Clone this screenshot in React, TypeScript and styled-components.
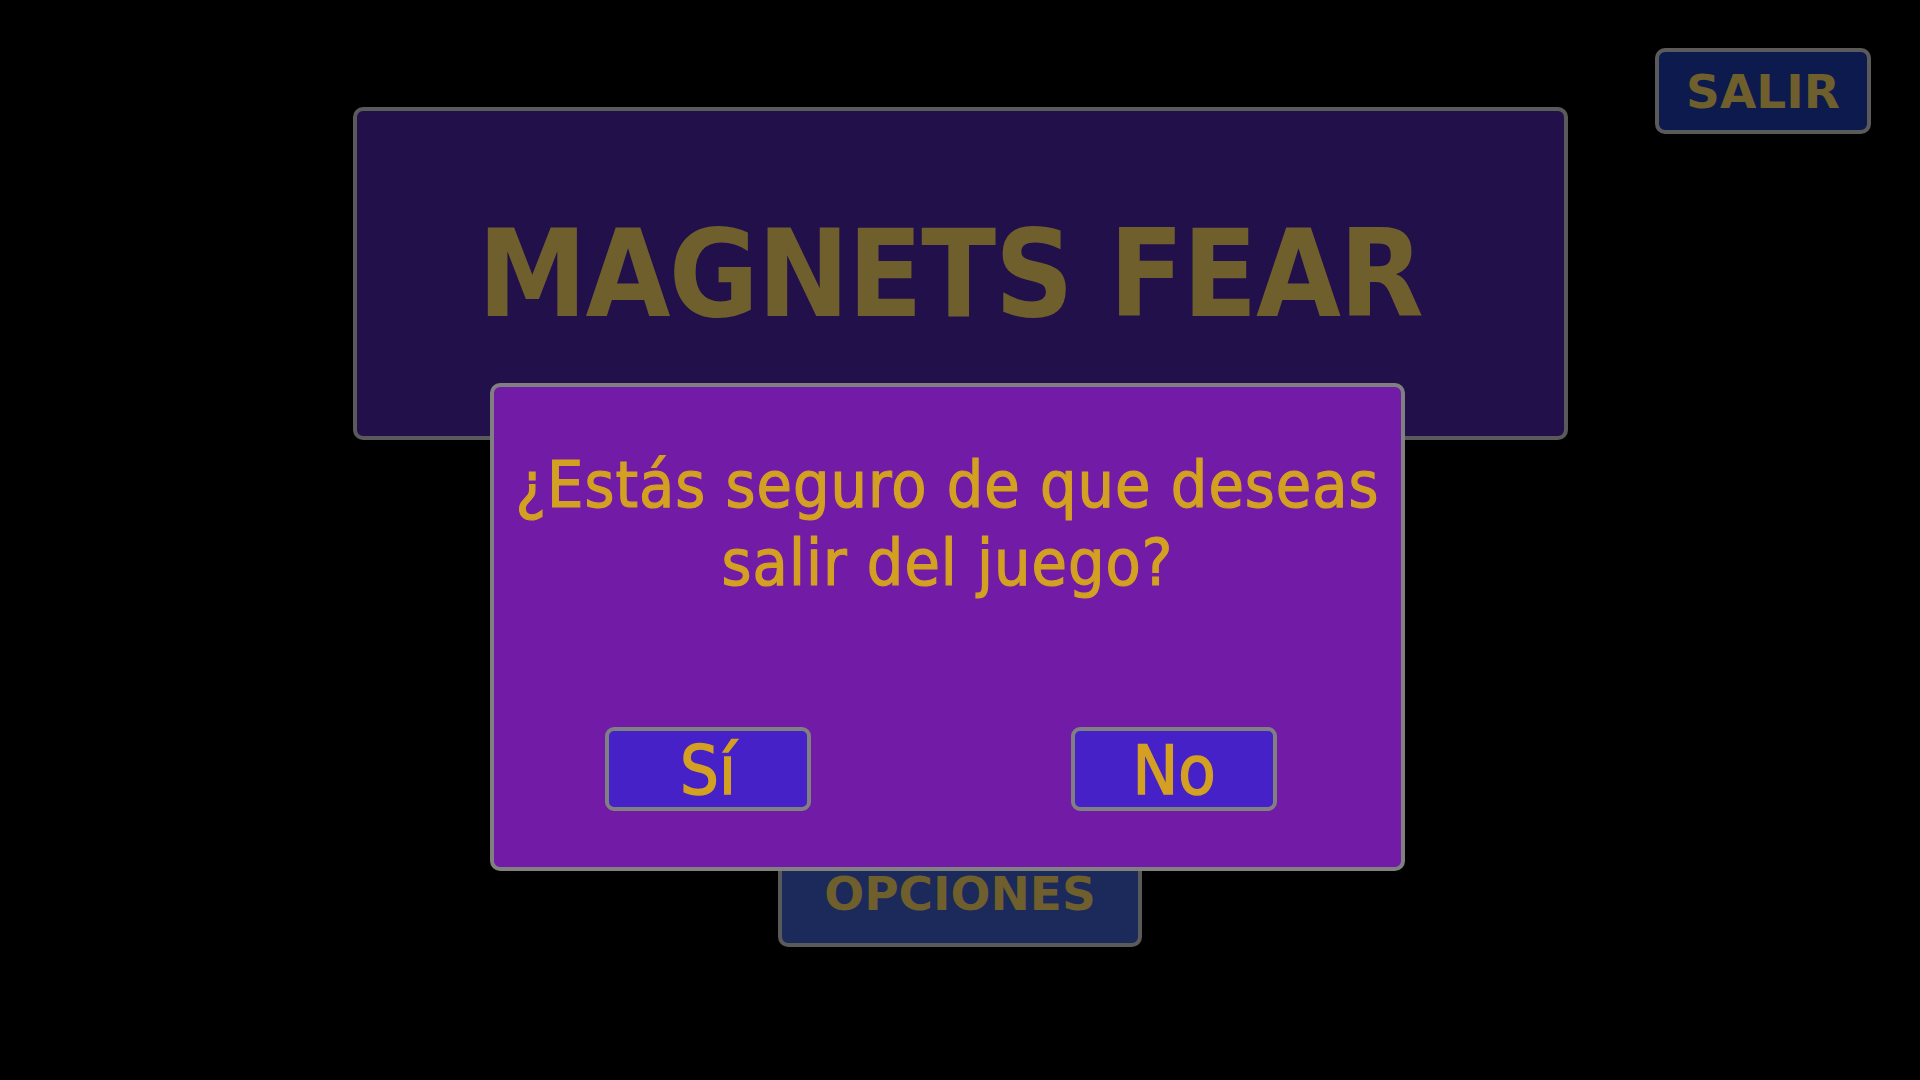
import styled, { createGlobalStyle } from "styled-components";

const GlobalStyle = createGlobalStyle`
  html, body {
    margin: 0;
    padding: 0;
    background: #000;
  }
  body {
    font-family: "DejaVu Sans", "Liberation Sans", sans-serif;
  }
`;

// main menu sits behind the dialog, colours already dimmed
const Screen = styled.div`
  position: relative;
  width: 1920px;
  height: 1080px;
  overflow: hidden;
  background: #000;
  display: grid;
  grid-template-columns: 1fr 1215px 1fr;
  align-items: start;
  padding-top: 48px;
  box-sizing: border-box;
`;

const Menu = styled.div`
  grid-column: 2;
  margin-top: 59px;
  display: flex;
  flex-direction: column;
  align-items: center;
`;

const TitlePanel = styled.div`
  width: 100%;
  height: 333px;
  box-sizing: border-box;
  display: flex;
  align-items: center;
  justify-content: center;
  background: #22104a;
  border: 4px solid #5a5a5a;
  border-radius: 10px;
`;

const Title = styled.h1`
  margin: 0;
  padding-right: 20px;
  font-family: "DejaVu Sans Condensed", "DejaVu Sans", sans-serif;
  font-weight: bold;
  font-size: 122px;
  color: #6e5f2d;
  letter-spacing: -1.5px;
`;

const MenuButton = styled.button<{ $bg: string; $width: number; $height: number }>`
  width: ${(p) => p.$width}px;
  height: ${(p) => p.$height}px;
  box-sizing: border-box;
  background: ${(p) => p.$bg};
  border: 4px solid #5a5a5a;
  border-radius: 10px;
  color: #6e5f2d;
  font-family: "DejaVu Sans", sans-serif;
  font-weight: bold;
  font-size: 47px;
  padding: 0;
  cursor: pointer;
`;

const MenuList = styled.div`
  display: flex;
  flex-direction: column;
  gap: 30px;
  margin-top: 261px;
`;

const Corner = styled.div`
  grid-column: 3;
  justify-self: end;
  padding-right: 49px;
`;

const Overlay = styled.div`
  position: absolute;
  inset: 0;
`;

const Dialog = styled.div`
  position: absolute;
  left: 490px;
  top: 383px;
  width: 915px;
  height: 488px;
  box-sizing: border-box;
  background: #711ba6;
  border: 4px solid #808080;
  border-radius: 10px;
  display: flex;
  flex-direction: column;
  align-items: center;
  font-family: "DejaVu Sans Condensed", "DejaVu Sans", sans-serif;
  color: #d4a021;
`;

const Question = styled.p`
  margin: 0;
  padding-top: 59px;
  font-size: 64px;
  line-height: 78px;
  letter-spacing: 1px;
  text-align: center;
  -webkit-text-stroke: 1.2px #d4a021;
`;

const Choices = styled.div`
  display: flex;
  align-self: stretch;
  gap: 260px;
  padding-left: 111px;
  margin-top: 125px;
`;

const ChoiceButton = styled.button`
  width: 206px;
  height: 84px;
  box-sizing: border-box;
  background: #4521c7;
  border: 4px solid #808080;
  border-radius: 9px;
  color: #d4a021;
  font-family: "DejaVu Sans Condensed", "DejaVu Sans", sans-serif;
  font-size: 68px;
  line-height: 1;
  padding: 4px 0 0;
  -webkit-text-stroke: 1.5px #d4a021;
  cursor: pointer;
`;

export default function App() {
  return (
    <>
      <GlobalStyle />
      <Screen>
        <Menu>
          <TitlePanel>
            <Title>MAGNETS FEAR</Title>
          </TitlePanel>
          <MenuList>
            <MenuButton $bg="#1b2a5b" $width={364} $height={108}>
              JUGAR
            </MenuButton>
            <MenuButton $bg="#1b2a5b" $width={364} $height={108}>
              OPCIONES
            </MenuButton>
          </MenuList>
        </Menu>
        <Corner>
          <MenuButton $bg="#0d1a4e" $width={216} $height={86}>
            SALIR
          </MenuButton>
        </Corner>
        <Overlay>
          <Dialog>
            <Question>
              ¿Estás seguro de que deseas
              <br />
              salir del juego?
            </Question>
            <Choices>
              <ChoiceButton>Sí</ChoiceButton>
              <ChoiceButton>No</ChoiceButton>
            </Choices>
          </Dialog>
        </Overlay>
      </Screen>
    </>
  );
}
